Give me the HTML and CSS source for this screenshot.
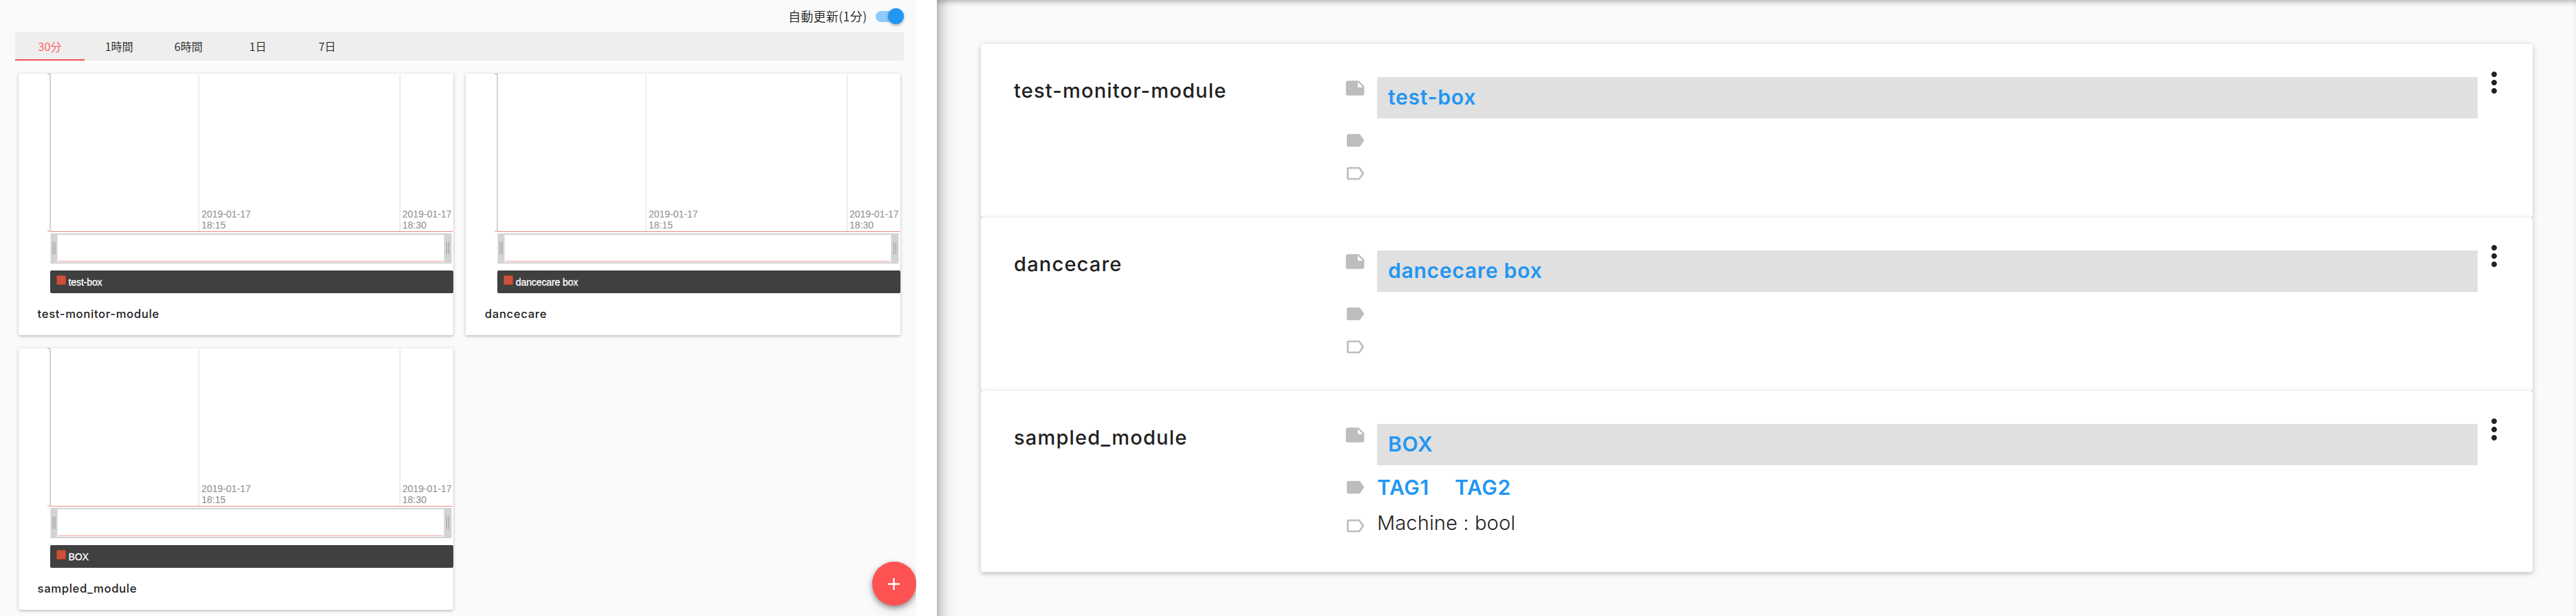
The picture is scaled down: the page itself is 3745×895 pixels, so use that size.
FILE: index.html
```
<!DOCTYPE html>
<html lang="ja">
<head>
<meta charset="utf-8">
<title>Monitor</title>
<link rel="stylesheet" href="styles.css">
</head>
<body>
<svg class="defs" aria-hidden="true">
  <symbol id="note" viewBox="0 0 24 24"><path d="M22 10l-6-6H4c-1.1 0-2 .9-2 2v12.01c0 1.1.9 1.99 2 1.99l16-.01c1.1 0 2-.89 2-2V10zm-7-4.5l5.5 5.5H15V5.5z"/></symbol>
  <symbol id="label" viewBox="0 0 24 24"><path d="M17.63 5.84C17.27 5.33 16.67 5 16 5L5 5.01C3.9 5.01 3 5.9 3 7v10c0 1.1.9 1.99 2 1.99L16 19c.67 0 1.27-.33 1.63-.84L22 12l-4.37-6.16z"/></symbol>
  <symbol id="label-outline" viewBox="0 0 24 24"><path d="M17.63 5.84C17.27 5.33 16.67 5 16 5L5 5.01C3.9 5.01 3 5.9 3 7v10c0 1.1.9 1.99 2 1.99L16 19c.67 0 1.27-.33 1.63-.84L22 12l-4.37-6.16zM16 17H5V7h11l3.55 5L16 17z"/></symbol>
  <symbol id="more" viewBox="0 0 24 24"><path d="M12 8c1.1 0 2-.9 2-2s-.9-2-2-2-2 .9-2 2 .9 2 2 2zm0 2c-1.1 0-2 .9-2 2s.9 2 2 2 2-.9 2-2-.9-2-2-2zm0 6c-1.1 0-2 .9-2 2s.9 2 2 2 2-.9 2-2-.9-2-2-2z"/></symbol>
  <symbol id="plot" viewBox="0 0 632 276">
    <path d="M42 .5h4v228.500h-4" fill="none" stroke="#a6a6a6"/>
    <path d="M262 2v227M554.500 2v227" stroke="#bdbdbd" stroke-dasharray="1 1"/>
    <path d="M46.500 229.500H631" stroke="#e88a80"/>
    <path d="M46.500 232h583v44h-583z" fill="#d3d3d3"/>
    <path d="M56.500 234h562v40h-562z" fill="#fff"/>
    <path d="M58 272.500h559" stroke="#ee9f97"/>
    <path d="M50 244.500v18M53 244.500v18M622.500 244.500v18M625.500 244.500v18" stroke="#999"/>
  </symbol>
</svg>

<main class="screen">
  <section class="dashboard">
    <div class="refresh"><span>自動更新(1分)</span><span class="switch"><i class="knob"></i></span></div>
    <nav class="tabs">
      <a class="tab active">30分</a><a class="tab">1時間</a><a class="tab">6時間</a><a class="tab">1日</a><a class="tab">7日</a>
    </nav>
    <div class="cards">
      <article class="card">
        <svg class="chart" width="632" height="276">
          <use href="#plot"/>
          <text x="266" y="209">2019-01-17</text><text x="266" y="225">18:15</text>
          <text x="558" y="209">2019-01-17</text><text x="558" y="225">18:30</text>
        </svg>
        <div class="legend"><i class="swatch"></i>test-box</div>
        <h2 class="name">test-monitor-module</h2>
      </article>
      <article class="card">
        <svg class="chart" width="632" height="276">
          <use href="#plot"/>
          <text x="266" y="209">2019-01-17</text><text x="266" y="225">18:15</text>
          <text x="558" y="209">2019-01-17</text><text x="558" y="225">18:30</text>
        </svg>
        <div class="legend"><i class="swatch"></i>dancecare box</div>
        <h2 class="name">dancecare</h2>
      </article>
      <article class="card">
        <svg class="chart" width="632" height="276">
          <use href="#plot"/>
          <text x="266" y="209">2019-01-17</text><text x="266" y="225">18:15</text>
          <text x="558" y="209">2019-01-17</text><text x="558" y="225">18:30</text>
        </svg>
        <div class="legend"><i class="swatch"></i>BOX</div>
        <h2 class="name">sampled_module</h2>
      </article>
    </div>
    <button class="fab" aria-label="add"><svg width="17" height="17"><path d="M8.500 0v17M0 8.500h17" stroke="#fff" stroke-width="2.300"/></svg></button>
  </section>

  <section class="modules">
    <div class="list">
      <article class="module">
        <h2 class="title">test-monitor-module</h2>
        <div class="fields">
          <div class="field box"><svg class="icon"><use href="#note"/></svg><div class="value"><a class="link">test-box</a></div></div>
          <div class="field"><svg class="icon"><use href="#label"/></svg></div>
          <div class="field"><svg class="icon"><use href="#label-outline"/></svg></div>
        </div>
        <svg class="more"><use href="#more"/></svg>
      </article>
      <article class="module">
        <h2 class="title">dancecare</h2>
        <div class="fields">
          <div class="field box"><svg class="icon"><use href="#note"/></svg><div class="value"><a class="link">dancecare box</a></div></div>
          <div class="field"><svg class="icon"><use href="#label"/></svg></div>
          <div class="field"><svg class="icon"><use href="#label-outline"/></svg></div>
        </div>
        <svg class="more"><use href="#more"/></svg>
      </article>
      <article class="module last">
        <h2 class="title">sampled_module</h2>
        <div class="fields">
          <div class="field box"><svg class="icon"><use href="#note"/></svg><div class="value"><a class="link">BOX</a></div></div>
          <div class="field tags"><svg class="icon"><use href="#label"/></svg><a class="link">TAG1</a><a class="link">TAG2</a></div>
          <div class="field meta"><svg class="icon"><use href="#label-outline"/></svg><span class="type">Machine : bool</span></div>
        </div>
        <svg class="more"><use href="#more"/></svg>
      </article>
    </div>
  </section>
</main>
</body>
</html>
```
FILE: styles.css
```
* { box-sizing: border-box; }
body { margin: 0; background: #fff; color: #212121; font-family: Inter, "Noto Sans CJK JP", sans-serif; }
h2 { margin: 0; }
.defs { position: absolute; width: 0; height: 0; }
.screen { display: flex; gap: 30px; height: 895px; overflow: hidden; }

/* dashboard */
.dashboard { position: relative; width: 1332px; height: 895px; background: #fafafa; overflow: hidden; }
.refresh { display: flex; justify-content: flex-end; align-items: center; gap: 12px; height: 47px; padding-right: 18.500px; font: 350 18px/47px "Noto Sans CJK JP", sans-serif; letter-spacing: .35px; }
.switch { display: flex; justify-content: flex-end; align-items: center; width: 41px; height: 16px; border-radius: 8px; background: #90caf9; }
.knob { flex: none; width: 23px; height: 23px; border-radius: 50%; background: #2196f3; box-shadow: 0 2px 4px rgba(0,0,0,.3); }
.tabs { display: flex; height: 41px; margin: 0 18.500px 0 22px; background: #eee; }
.tab { width: 100.800px; height: 41px; text-align: center; font: 350 16px/41px "Noto Sans CJK JP", sans-serif; }
.active { color: #ff5252; box-shadow: inset 0 -2px #ff5252; }
.cards { display: grid; grid-template-columns: 632px 632px; gap: 19px 18.300px; padding: 19px 0 0 26.500px; }
.card { display: flex; flex-direction: column; height: 380px; background: #fff; border-radius: 2px; box-shadow: 0 1px 5px rgba(0,0,0,.18), 0 2px 3px rgba(0,0,0,.1); }
.chart { display: block; font: 14px "Liberation Sans", sans-serif; }
.chart text { fill: #8c8c8c; }
.legend { display: flex; align-items: center; gap: 4px; height: 33px; margin: 10px 0 0 46px; padding-left: 9px; border-radius: 2px; background: #404040; color: #fff; font: 14px "Liberation Sans", sans-serif; -webkit-text-stroke: .3px #fff; letter-spacing: -.1px; }
.swatch { width: 14px; height: 14px; margin-bottom: 5px; border: 1px solid #a93b2b; border-radius: 1px; background: #cb513a; }
.name { margin: 15px 0 0 28px; font-size: 16.600px; line-height: 30px; font-weight: 500; letter-spacing: .7px; }
.fab { position: absolute; left: 1267.500px; top: 816px; display: flex; align-items: center; justify-content: center; width: 64px; height: 64px; padding: 0; border: 0; border-radius: 50%; background: #ff5252; box-shadow: 0 3px 7px rgba(0,0,0,.35), 0 6px 14px rgba(0,0,0,.15); }

/* module list */
.modules { width: 2383px; height: 895px; padding: 64px 63px 0 64px; background: #fafafa; box-shadow: inset 0 6px 8px -4px rgba(0,0,0,.3), inset 24px 0 22px -20px rgba(0,0,0,.34); }
.list { width: 2256px; }
.module { display: flex; height: 252px; padding: 48px 32px 0 48px; background: #fff; border-radius: 4px; box-shadow: 0 2px 10px rgba(0,0,0,.2), 0 3px 4px rgba(0,0,0,.06); }
.last { height: 263px; }
.title { flex: none; width: 480px; font-size: 29px; line-height: 40px; font-weight: 500; letter-spacing: 1.200px; }
.fields { flex: none; width: 1648px; }
.field { display: flex; height: 48px; }
.box { height: 76px; }
.icon { flex: none; width: 32px; height: 32px; margin-right: 16px; fill: #bdbdbd; }
.value { flex: 1; height: 60px; padding: 8px 16px; background: #e0e0e0; }
.link { color: #2196f3; font-size: 30px; line-height: 42px; font-weight: 600; letter-spacing: .75px; }
.tags { height: 56px; }
.tags .link { width: 76px; margin: -5px 37px 0 0; }
.type { margin-top: -9px; font-size: 29px; line-height: 42px; font-weight: 300; letter-spacing: .15px; }
.more { flex: none; width: 48px; height: 48px; margin-top: -16px; fill: #212121; }
```
